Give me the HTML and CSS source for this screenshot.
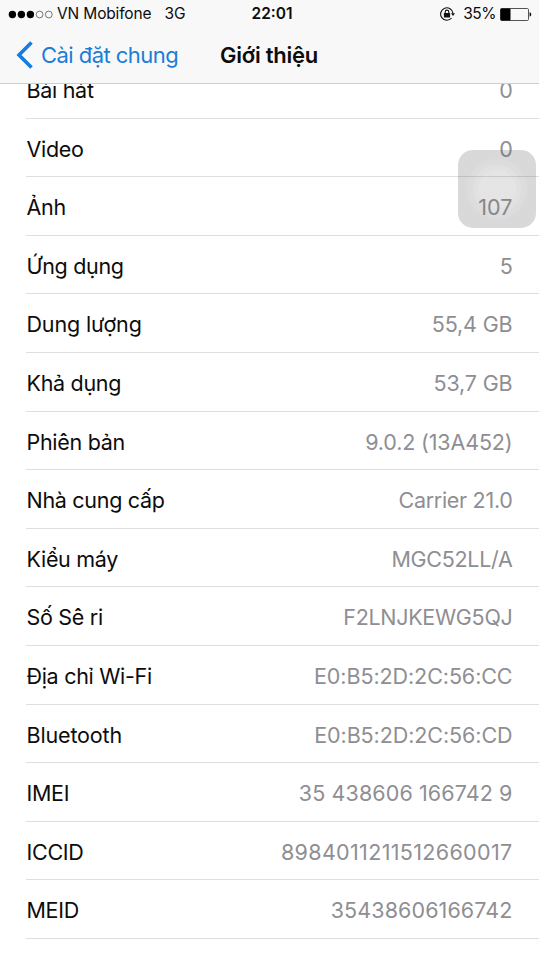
FILE: index.html
```
<!DOCTYPE html>
<html lang="vi">
<head>
<meta charset="utf-8">
<title>Giới thiệu</title>
<link rel="stylesheet" href="styles.css">
</head>
<body>
<header class="header">
  <div class="status">
    <div class="status-left">
      <svg class="signal" width="45" height="9" viewBox="0 0 45 9"><g fill="#000"><circle cx="4.4" cy="4.5" r="3.7"/><circle cx="13.4" cy="4.5" r="3.7"/><circle cx="22.4" cy="4.5" r="3.7"/></g><g fill="none" stroke="#555" stroke-width=".8"><circle cx="31.6" cy="4.5" r="3.4"/><circle cx="40.8" cy="4.5" r="3.4"/></g></svg>
      <span class="carrier">VN Mobifone</span>
      <span class="network">3G</span>
    </div>
    <span class="clock">22:01</span>
    <div class="status-right">
      <svg class="lock" width="15" height="14" viewBox="0 0 15 14"><path d="M11.6 11A6.2 6.2 0 1 1 13 6.4" fill="none" stroke="#111" stroke-width="1.1"/><path d="M11 6.3h4l-2 2.7z" fill="#111"/><rect x="3.9" y="6" width="6.2" height="4.5" rx=".4" fill="#111"/><path d="M5.2 6.2V4.9a1.8 1.8 0 0 1 3.6 0v1.3" fill="none" stroke="#111" stroke-width="1.1"/></svg>
      <span class="percent">35%</span>
      <svg class="battery" width="32" height="13" viewBox="0 0 32 13"><rect x=".5" y=".5" width="28" height="12" rx="1.2" fill="none" stroke="#555"/><rect x=".5" y=".5" width="10" height="12" rx="1" fill="#000"/><path d="M29.6 4.3c2.2.4 2.2 4 0 4.4z" fill="#000"/></svg>
    </div>
  </div>
  <nav class="nav">
    <a class="back"><svg class="chevron" width="18" height="28" viewBox="0 0 18 28"><path d="M16.5 1.5 4 14l12.5 12.5" fill="none" stroke="#147de0" stroke-width="3.6"/></svg><span class="back-label">Cài đặt chung</span></a>
    <h1 class="title">Giới thiệu</h1>
  </nav>
</header>
<main class="list">
  <div class="row"><span class="label">Bài hát</span><span class="value">0</span></div>
  <div class="row"><span class="label">Video</span><span class="value">0</span></div>
  <div class="row"><span class="label">Ảnh</span><span class="value digits">107</span></div>
  <div class="row"><span class="label">Ứng dụng</span><span class="value">5</span></div>
  <div class="row"><span class="label loose">Dung lượng</span><span class="value loose">55,4 GB</span></div>
  <div class="row"><span class="label">Khả dụng</span><span class="value loose">53,7 GB</span></div>
  <div class="row"><span class="label">Phiên bản</span><span class="value loose">9.0.2 (13A452)</span></div>
  <div class="row"><span class="label">Nhà cung cấp</span><span class="value">Carrier 21.0</span></div>
  <div class="row"><span class="label">Kiểu máy</span><span class="value">MGC52LL/A</span></div>
  <div class="row"><span class="label">Số Sê ri</span><span class="value">F2LNJKEWG5QJ</span></div>
  <div class="row"><span class="label">Địa chỉ Wi-Fi</span><span class="value address">E0:B5:2D:2C:56:CC</span></div>
  <div class="row"><span class="label loose">Bluetooth</span><span class="value address">E0:B5:2D:2C:56:CD</span></div>
  <div class="row"><span class="label">IMEI</span><span class="value digits">35 438606 166742 9</span></div>
  <div class="row"><span class="label">ICCID</span><span class="value serial">8984011211512660017</span></div>
  <div class="row"><span class="label">MEID</span><span class="value digits">35438606166742</span></div>
</main>
<div class="assistive"></div>
</body>
</html>
```
FILE: styles.css
```
* { box-sizing: border-box; }
body {
  margin: 0;
  height: 959px;
  overflow: hidden;
  position: relative;
  background: #fff;
  color: #0c0c0c;
  font-family: Inter, "Liberation Sans", sans-serif;
}
.header {
  position: relative;
  z-index: 1;
  height: 84px;
  background: #f8f8f9;
  border-bottom: 1px solid #cfcfd1;
}
.status {
  display: grid;
  grid-template-columns: 1fr auto 1fr;
  align-items: center;
  height: 28px;
  padding: 0 7px 0 12px;
  font-size: 15.5px;
  line-height: 28px;
}
.status-left, .status-right { display: flex; align-items: center; }
.status-left { margin-left: -4px; }
.status-right { justify-content: flex-end; }
.carrier { margin-left: 4px; letter-spacing: -0.15px; }
.network { margin-left: 13px; }
.clock { font-weight: 600; letter-spacing: 0; }
.percent { margin: 0 4px 0 8px; letter-spacing: -0.5px; }
.nav {
  display: flex;
  align-items: center;
  height: 54px;
  padding-left: 15px;
}
.back { display: flex; align-items: center; color: #1b7dd6; font-size: 22px; letter-spacing: -0.55px; }
.back-label { margin-left: 8px; }
.title { margin: 0 0 0 42px; font-size: 22px; font-weight: 600; letter-spacing: -0.25px; }
.list { margin-top: -24px; }
.row {
  display: flex;
  justify-content: space-between;
  align-items: center;
  height: 58.6px;
  margin-left: 26px;
  padding: 2.5px 26.5px 0 0;
  border-bottom: 1px solid #dedee0;
  font-size: 21.5px;
  letter-spacing: -0.3px;
}
.label { margin-left: 0.5px; }
.value { color: #8e8e93; }
.loose { letter-spacing: -0.15px; }
.address { letter-spacing: -0.08px; }
.digits { letter-spacing: 0.1px; }
.serial { letter-spacing: 0.34px; }
.assistive {
  position: absolute;
  left: 458px;
  top: 150px;
  width: 78px;
  height: 78px;
  border-radius: 15px;
  background: radial-gradient(circle at center, rgba(95,95,95,.165) 0 18px, rgba(95,95,95,.19) 20px 23px, rgba(95,95,95,.215) 25px 29px, rgba(95,95,95,.24) 31px);
}
```
